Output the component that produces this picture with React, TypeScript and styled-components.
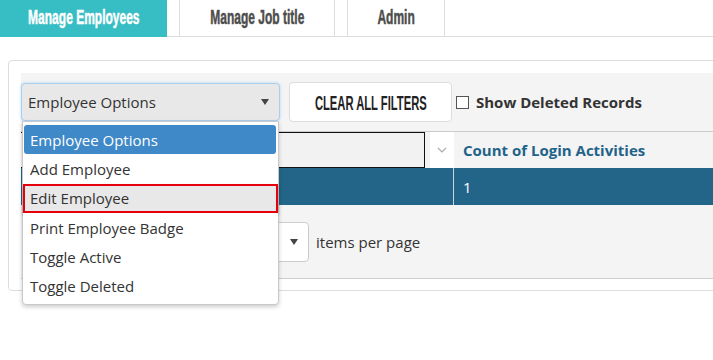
import React from 'react'
import styled, { createGlobalStyle } from 'styled-components'

const GlobalStyle = createGlobalStyle`
  html, body {
    margin: 0;
    padding: 0;
    background: #fff;
    overflow: hidden;
  }
  body {
    font-family: 'Open Sans', 'Liberation Sans', sans-serif;
    color: #333;
  }
`

// no Oswald offline: a bold Arial-metric face squeezed sideways stands in for it
const Condensed = styled.span<{ $scale: number; $heavy?: boolean }>`
  display: inline-block;
  font-family: 'Liberation Sans', Arial, sans-serif;
  font-weight: bold;
  font-size: 20px;
  white-space: nowrap;
  -webkit-text-stroke: ${p => (p.$heavy ? '0.5px currentColor' : '0')};
  transform: scaleX(${p => p.$scale});
  transform-origin: center;
`

const Page = styled.div`
  width: 713px;
  height: 360px;
  overflow: hidden;
`

const TabBar = styled.ul`
  display: flex;
  margin: 0;
  padding: 0;
  list-style: none;
  height: 36px;
  border-bottom: 1px solid #ddd;
`

const Tab = styled.li<{ $active?: boolean; $w: number }>`
  box-sizing: border-box;
  width: ${p => p.$w}px;
  height: 37px;
  margin-left: ${p => (p.$active ? 0 : 12)}px;
  margin-bottom: -1px;
  padding-bottom: 2px;
  display: flex;
  align-items: center;
  justify-content: center;
  background: ${p => (p.$active ? '#37bdc4' : '#fff')};
  border-left: ${p => (p.$active ? 'none' : '1px solid #ddd')};
  border-right: ${p => (p.$active ? 'none' : '1px solid #ddd')};
  border-bottom: ${p => (p.$active ? 'none' : '1px solid #ddd')};
  color: ${p => (p.$active ? '#fff' : '#4d4d4d')};
`

const Panel = styled.div`
  position: relative;
  margin: 23px 0 0 8px;
  width: 740px;
  border: 1px solid #ddd;
  border-radius: 4px;
  padding: 12px 0 11px 12px;
`

const Grid = styled.div`
  background: #f4f4f4;
  border-bottom: 1px solid #ccc;
`

const Toolbar = styled.div`
  display: flex;
  align-items: center;
  height: 58px;
`

const SelectWrap = styled.div`
  position: relative;
  box-sizing: border-box;
  width: 259px;
  height: 38px;
  margin-right: 9px;
  padding: 0 10px 0 6px;
  display: flex;
  align-items: center;
  justify-content: space-between;
  background: #e8e8e8;
  border: 1px solid #a9cff0;
  border-radius: 4px;
  box-shadow: 0 0 3px rgba(102, 175, 233, 0.45);
  font-size: 15px;
  color: #333;
  z-index: 2;
`

const Menu = styled.ul`
  position: absolute;
  top: calc(100% + 1px);
  left: 0;
  box-sizing: border-box;
  width: 257px;
  margin: 0;
  padding: 2px 0 3px;
  list-style: none;
  background: #fff;
  border: 1px solid #c9c9c9;
  border-radius: 0 0 4px 4px;
  box-shadow: 0 2px 4px rgba(0, 0, 0, 0.2);
`

const MenuItem = styled.li<{ $selected?: boolean; $focused?: boolean }>`
  box-sizing: border-box;
  height: 29.3px;
  display: flex;
  align-items: center;
  padding-left: ${p => (p.$selected ? 6 : 7)}px;
  margin: ${p => (p.$selected ? '1px 2px 0 1px' : '0')};
  border-radius: ${p => (p.$selected ? '3px' : '0')};
  background: ${p => (p.$selected ? '#3f89c9' : p.$focused ? '#e8e8e8' : '#fff')};
  color: ${p => (p.$selected ? '#fff' : '#333')};
  outline: ${p => (p.$focused ? '2px solid #e5000b' : 'none')};
  outline-offset: -2px;
  box-shadow: ${p => (p.$focused ? '0 2px 3px rgba(0,0,0,0.35)' : 'none')};
  font-size: 15px;
  white-space: nowrap;
`

const ClearButton = styled.button`
  box-sizing: border-box;
  width: 163px;
  height: 40px;
  margin-right: 4px;
  display: flex;
  align-items: center;
  justify-content: center;
  overflow: visible;
  background: #fff;
  border: 1px solid #ddd;
  border-radius: 4px;
  color: #222;
  padding: 2px 0 0;
`

const CheckLabel = styled.label`
  display: flex;
  align-items: center;
  font-weight: bold;
  font-size: 15px;
  color: #333;
`

const CheckBox = styled.span`
  box-sizing: border-box;
  width: 13px;
  height: 13px;
  margin-right: 7px;
  border: 1px solid #555;
  background: #fff;
`

const Columns = styled.div`
  display: grid;
  grid-template-columns: 433px 1fr;
`

const HeaderRow = styled(Columns)`
  height: 36px;
  border-top: 1px solid #ccc;
`

const FilterCell = styled.div`
  display: flex;
  align-items: stretch;
`

const FilterInput = styled.div`
  flex: 1;
  margin-right: 5px;
  border: 1px solid #111;
  border-left: none;
  background: #f2f2f2;
`

const SortCell = styled.div`
  width: 24px;
  display: flex;
  align-items: center;
  justify-content: center;
  background: #fff;
`

const HeaderCell = styled.div`
  display: flex;
  align-items: center;
  justify-content: space-between;
  padding: 0 7px 0 9px;
  font-weight: bold;
  font-size: 15px;
  color: #1f6389;
`

const DataRow = styled(Columns)`
  height: 37px;
  background: #236588;
  color: #fff;
  font-size: 15px;
`

const DataCell = styled.div<{ $divider?: boolean }>`
  display: flex;
  align-items: center;
  padding-left: 9px;
  border-right: ${p => (p.$divider ? '1px solid #c8d6df' : 'none')};
`

const Pager = styled.div`
  display: flex;
  align-items: center;
  height: 73px;
  padding-left: 8px;
  font-size: 15px;
  color: #333;
`

// page buttons sit under the open menu, so only their room is kept
const PagerNav = styled.div`
  width: 200px;
  margin-right: 10px;
`

const PageSize = styled.div`
  box-sizing: border-box;
  width: 70px;
  height: 40px;
  margin-right: 7px;
  padding: 0 10px;
  display: flex;
  align-items: center;
  justify-content: flex-end;
  background: #fff;
  border: 1px solid #ccc;
  border-radius: 4px;
`

const Caret = () => (
  <svg width="8" height="6" viewBox="0 0 8 6">
    <polygon points="0,0 8,0 4,6" fill="#444" />
  </svg>
)

const Chevron = () => (
  <svg width="10" height="6" viewBox="0 0 10 6">
    <polyline points="1,1 5,5 9,1" fill="none" stroke="#aaa" strokeWidth="1.2" />
  </svg>
)

const options = ['Employee Options', 'Add Employee', 'Edit Employee', 'Print Employee Badge', 'Toggle Active', 'Toggle Deleted']

export default function App() {
  return (
    <Page>
      <GlobalStyle />
      <TabBar>
        <Tab $active $w={167}>
          <Condensed $heavy $scale={0.6}>Manage Employees</Condensed>
        </Tab>
        <Tab $w={156}>
          <Condensed $heavy $scale={0.6}>Manage Job title</Condensed>
        </Tab>
        <Tab $w={98}>
          <Condensed $heavy $scale={0.6}>Admin</Condensed>
        </Tab>
      </TabBar>
      <Panel>
        <Grid>
          <Toolbar>
            <SelectWrap>
              <span>Employee Options</span>
              <Caret />
              <Menu>
                {options.map((o, i) => (
                  <MenuItem key={o} $selected={i === 0} $focused={i === 2}>
                    {o}
                  </MenuItem>
                ))}
              </Menu>
            </SelectWrap>
            <ClearButton>
              <Condensed $scale={0.56}>CLEAR ALL FILTERS</Condensed>
            </ClearButton>
            <CheckLabel>
              <CheckBox />
              Show Deleted Records
            </CheckLabel>
          </Toolbar>
          <HeaderRow>
            <FilterCell>
              <FilterInput />
              <SortCell>
                <Chevron />
              </SortCell>
            </FilterCell>
            <HeaderCell>
              Count of Login Activities
              <Chevron />
            </HeaderCell>
          </HeaderRow>
          <DataRow>
            <DataCell $divider />
            <DataCell>1</DataCell>
          </DataRow>
          <Pager>
            <PagerNav />
            <PageSize>
              <Caret />
            </PageSize>
            items per page
          </Pager>
        </Grid>
      </Panel>
    </Page>
  )
}
